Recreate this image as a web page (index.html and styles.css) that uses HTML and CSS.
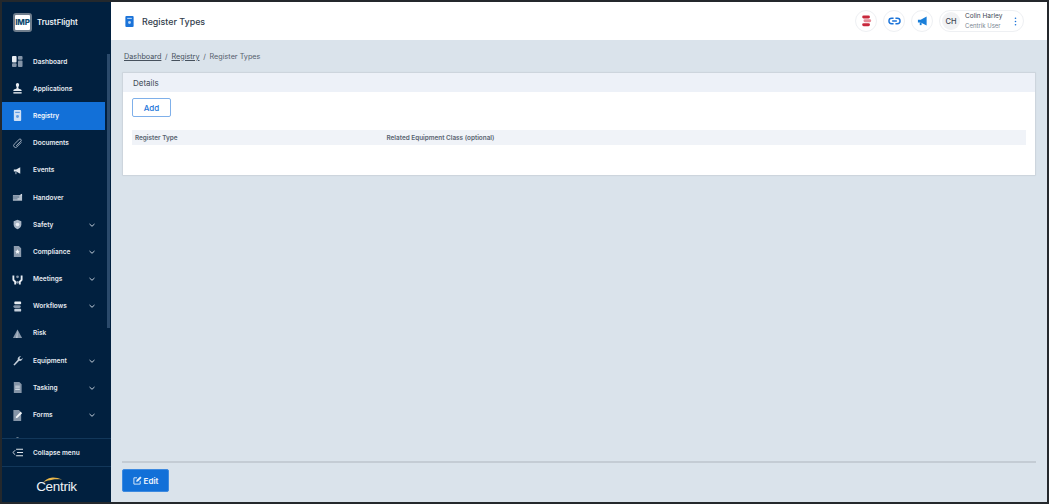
FILE: index.html
```html
<!DOCTYPE html>
<html lang="en">
<head>
<meta charset="utf-8">
<title>Register Types</title>
<link rel="stylesheet" href="styles.css">
</head>
<body>
<div class="frame">
  <aside class="sidebar">
    <div class="brand">
      <span class="imp">IMP</span>
      <span class="brand-name">TrustFlight</span>
    </div>
    <div class="nav-wrap">
      <nav class="nav">
        <a class="item"><svg class="ic" viewBox="0 0 12 12"><rect x="0" y="0" width="5" height="7" rx="1" fill="#e8edf3"/><rect x="0" y="8" width="5" height="4" rx="1" fill="#8595a8"/><rect x="6.500" y="0" width="5" height="4" rx="1" fill="#8595a8"/><rect x="6.500" y="5" width="5" height="7" rx="1" fill="#8595a8"/></svg><span>Dashboard</span></a>
        <a class="item"><svg class="ic" viewBox="0 0 12 12"><path d="M4.200 1.800a1.800 1.800 0 0 1 3.600 0c0 1.300-.9 2-.9 3.500 0 .7.500 1 1.300 1.200 1.400.3 2.300.6 2.300 1.800v.5H1.500v-.5c0-1.200.9-1.500 2.300-1.800.8-.2 1.300-.5 1.300-1.200 0-1.500-.9-2.200-.9-3.500z" fill="#e8edf3"/><rect x="1.500" y="10" width="9" height="1.500" fill="#e8edf3"/></svg><span>Applications</span></a>
        <a class="item active"><svg class="ic" viewBox="0 0 12 12"><rect x="2" y="0" width="8" height="12" rx="1" fill="#cfe0f5"/><rect x="3.500" y="2" width="5" height="1.200" fill="#5f9be3"/><circle cx="6" cy="7" r="1.600" fill="#5f9be3"/></svg><span>Registry</span></a>
        <a class="item"><svg class="ic" viewBox="0 0 12 12"><path d="M10.500 4.500 5.300 9.700a2 2 0 0 1-2.900-2.900l5.400-5.300a1.300 1.300 0 0 1 1.900 1.900L4.500 8.500" fill="none" stroke="#a9b6c6" stroke-width="1"/></svg><span>Documents</span></a>
        <a class="item"><svg class="ic" viewBox="0 0 12 12"><path d="M2 5h2.500L9 2.500v7L4.500 7H2z" fill="#dfe5ec"/><rect x="3.500" y="7.500" width="1.500" height="2.500" fill="#8595a8"/></svg><span>Events</span></a>
        <a class="item"><svg class="ic" viewBox="0 0 12 12"><rect x="1" y="3.500" width="10" height="6" fill="#b6c1ce"/><path d="M1 5h7v1H1zM1 7h5v1H1z" fill="#46607b"/><path d="M8 3.500 11 2v2z" fill="#e8edf3"/></svg><span>Handover</span></a>
        <a class="item"><svg class="ic" viewBox="0 0 12 12"><path d="M6 .8 10.200 2.500v3.600c0 2.600-2 4.300-4.200 5.100-2.200-.8-4.200-2.500-4.200-5.100V2.500z" fill="#a9b6c6"/><circle cx="6" cy="6" r="2" fill="#e8edf3"/></svg><span>Safety</span><svg class="chev" viewBox="0 0 8 8"><path d="M1.500 3 4 5.300 6.500 3" fill="none" stroke="#c4ced9" stroke-width="1"/></svg></a>
        <a class="item"><svg class="ic" viewBox="0 0 12 12"><path d="M2 0h5.500L10 2.500V12H2z" fill="#8d9cae"/><path d="m6 3.500.8 1.700 1.800.2-1.300 1.200.3 1.900L6 7.600l-1.600.9.300-1.900-1.300-1.200 1.800-.2z" fill="#f2f5f8"/></svg><span>Compliance</span><svg class="chev" viewBox="0 0 8 8"><path d="M1.500 3 4 5.300 6.500 3" fill="none" stroke="#c4ced9" stroke-width="1"/></svg></a>
        <a class="item"><svg class="ic" viewBox="0 0 12 12"><circle cx="6" cy="3" r="1.500" fill="#8595a8"/><circle cx="6" cy="9" r="1.500" fill="#8595a8"/><path d="M.5 1.500h2V6L4.500 8v3.500h-2V8.900L.5 6.900zM11.500 1.500h-2V6L7.500 8v3.500h2V8.900l2-2z" fill="#e8edf3"/></svg><span>Meetings</span><svg class="chev" viewBox="0 0 8 8"><path d="M1.500 3 4 5.300 6.500 3" fill="none" stroke="#c4ced9" stroke-width="1"/></svg></a>
        <a class="item"><svg class="ic" viewBox="0 0 12 12"><rect x="2.500" y="0.500" width="7.500" height="3" rx="1" fill="#e8edf3"/><rect x="1.500" y="4.500" width="8" height="3" rx="1.500" fill="#8595a8"/><rect x="2.500" y="8.500" width="7.500" height="3" rx="1" fill="#c5cfdb"/></svg><span>Workflows</span><svg class="chev" viewBox="0 0 8 8"><path d="M1.500 3 4 5.300 6.500 3" fill="none" stroke="#c4ced9" stroke-width="1"/></svg></a>
        <a class="item"><svg class="ic" viewBox="0 0 12 12"><path d="M6 1.500 11 11H1z" fill="#8595a8"/><path d="M6 1.500V11H4.500z" fill="#c5cfdb"/></svg><span>Risk</span></a>
        <a class="item"><svg class="ic" viewBox="0 0 12 12"><path d="M1.500 10.500 6.300 5.200c-.5-1.700.8-3.900 3.400-3.700L8 3.200l.7 1.200 1.500.2 1.300-1.500c.3 2.400-1.800 3.800-3.700 3.300l-5 5.100z" fill="#c5cfdb"/></svg><span>Equipment</span><svg class="chev" viewBox="0 0 8 8"><path d="M1.500 3 4 5.300 6.500 3" fill="none" stroke="#c4ced9" stroke-width="1"/></svg></a>
        <a class="item"><svg class="ic" viewBox="0 0 12 12"><path d="M2 0h6l2.500 2.500V12H2z" fill="#8595a8"/><path d="M3.500 4h5v.8h-5zM3.500 6h5v.8h-5zM3.500 8h5v.8h-5z" fill="#e8edf3"/></svg><span>Tasking</span><svg class="chev" viewBox="0 0 8 8"><path d="M1.500 3 4 5.300 6.500 3" fill="none" stroke="#c4ced9" stroke-width="1"/></svg></a>
        <a class="item"><svg class="ic" viewBox="0 0 12 12"><path d="M1.500 0h6L10 2.500V12H1.500z" fill="#8595a8"/><path d="m4 9 .5-2L9.500 2l1.500 1.500-5 5z" fill="#f2f5f8"/></svg><span>Forms</span><svg class="chev" viewBox="0 0 8 8"><path d="M1.500 3 4 5.300 6.500 3" fill="none" stroke="#c4ced9" stroke-width="1"/></svg></a>
        <a class="item"><svg class="ic" viewBox="0 0 12 12"><circle cx="6" cy="3" r="2.500" fill="#e8edf3"/></svg></a>
      </nav>
      <div class="scrollbar"></div>
    </div>
    <a class="collapse"><svg class="ic" viewBox="0 0 12 12"><path d="M4.500 2H12v1H4.500zM5.500 5.500H12v1H5.500zM4.500 9H12v1H4.500z" fill="#dfe5ec"/><path d="M3.500 3.500 1 6l2.500 2.500" fill="none" stroke="#dfe5ec" stroke-width="1"/></svg><span>Collapse menu</span></a>
    <div class="centrik">
      <span class="centrik-word">Centrik</span>
      <svg class="swoosh" viewBox="0 0 26 6"><path d="M1 5.500C6 1.500 10 .5 13 .5c4 0 8 1 12 2.500-5-.5-9-.5-13 .2-4 .6-7 1.500-11 2.800z" fill="#e9b64a"/></svg>
    </div>
  </aside>
  <div class="main">
    <header class="topbar">
      <div class="title-wrap">
        <svg class="title-ic" viewBox="0 0 12 12"><rect x="1.500" y="0" width="9" height="12" rx="1.200" fill="#1a73d9"/><rect x="3.500" y="2" width="5" height="1.200" fill="#b6d4f5"/><circle cx="6" cy="7" r="1.600" fill="#b6d4f5"/></svg>
        <span class="title">Register Types</span>
      </div>
      <div class="actions">
        <span class="round"><svg class="act-ic" viewBox="0 0 12 14"><rect x="1" y="0.500" width="9" height="3.500" rx="1.700" fill="#c8283c"/><rect x="2.500" y="5" width="9" height="3.500" rx="1.700" fill="#e58b96"/><rect x="1" y="9.500" width="9" height="3.500" rx="1.700" fill="#c8283c"/></svg></span>
        <span class="round"><svg class="act-ic wide" viewBox="0 0 14 8"><path d="M6 1H4a3 3 0 0 0 0 6h2M8 1h2a3 3 0 0 1 0 6H8M4.500 4h5" fill="none" stroke="#1a73d9" stroke-width="1.500"/></svg></span>
        <span class="round"><svg class="act-ic" viewBox="0 0 12 12"><path d="M1 4.500h3L10.500 1v10L4 7.500H1z" fill="#1a7fd9"/><rect x="3" y="7.500" width="2" height="3" fill="#1a7fd9"/></svg></span>
        <div class="user">
          <span class="avatar">CH</span>
          <div class="user-text"><span class="user-name">Colin Harley</span><span class="user-role">Centrik User</span></div>
          <svg class="dots" viewBox="0 0 3 11"><circle cx="1.500" cy="1.500" r="1" fill="#1a73d9"/><circle cx="1.500" cy="5.500" r="1" fill="#1a73d9"/><circle cx="1.500" cy="9.500" r="1" fill="#1a73d9"/></svg>
        </div>
      </div>
    </header>
    <div class="content">
      <div class="crumbs"><a>Dashboard</a><span class="sep">/</span><a>Registry</a><span class="sep">/</span><span>Register Types</span></div>
      <section class="card">
        <div class="card-head">Details</div>
        <div class="card-body">
          <button class="btn-add">Add</button>
          <div class="thead"><span class="col1">Register Type</span><span>Related Equipment Class (optional)</span></div>
        </div>
      </section>
      <footer class="foot">
        <button class="btn-edit"><svg class="edit-ic" viewBox="0 0 10 10"><path d="M8 5.500V9H1V2h3.500" fill="none" stroke="#e6f0fb" stroke-width="1"/><path d="M3.500 6.500 4 4.500 8 .5 9.500 2l-4 4z" fill="#e6f0fb"/></svg>Edit</button>
      </footer>
    </div>
  </div>
</div>
</body>
</html>
```
FILE: styles.css
```css
* { box-sizing: border-box; }
html, body { margin: 0; height: 100%; }
body { font-family: Inter, "Liberation Sans", sans-serif; background: #222; overflow: hidden; }
.frame { display: flex; width: 1049px; height: 504px; border: 2px solid #24282c; overflow: hidden; }
.sidebar { width: 109px; flex: none; background: #01203f; display: flex; flex-direction: column; }
.brand { height: 40px; display: flex; align-items: center; gap: 5px; padding-left: 11px; flex: none; }
.imp { width: 19px; height: 19px; background: #fff; border: 2px solid #6f7d8c; border-radius: 3px; color: #0e4a6e; font-size: 8px; font-weight: 800; display: flex; align-items: center; justify-content: center; letter-spacing: -.2px; }
.brand-name { color: #eef2f6; font-size: 7.800px; font-weight: 600; }
.nav-wrap { flex: 1 1 0; min-height: 0; display: flex; position: relative; overflow: hidden; border-bottom: 1px solid #12375a; padding-top: 6px; }
.nav { width: 103px; flex: none; }
.item { height: 27.200px; display: flex; align-items: center; color: #e6ebf1; font-size: 6.500px; font-weight: 600; }
.item > span { flex: 1; }
.item .ic { margin: 0 10px; }
.ic { width: 11px; height: 11px; flex: none; }
.active { background: #1270d8; color: #f4f8fd; }
.chev { width: 8px; height: 8px; flex: none; margin-right: 9px; }
.scrollbar { position: absolute; right: 1px; top: 12px; width: 3px; height: 274px; background: #2b4a6b; }
.collapse { height: 28px; flex: none; display: flex; align-items: center; color: #e6ebf1; font-size: 6.500px; font-weight: 600; border-bottom: 1px solid #12375a; }
.collapse .ic { margin: 0 10px; }
.centrik { height: 35px; flex: none; display: flex; justify-content: center; align-items: center; position: relative; }
.centrik-word { color: #eef2f6; font-family: "Liberation Sans", sans-serif; font-size: 13.500px; letter-spacing: -.3px; margin-top: 3px; }
.swoosh { position: absolute; left: 41px; top: 10px; width: 20px; height: 5px; }
.main { flex: 1; min-width: 0; display: flex; flex-direction: column; background: #dae3eb; }
.topbar { height: 38px; flex: none; background: #fff; display: flex; align-items: center; justify-content: space-between; padding: 0 23px 0 13px; }
.title-wrap { display: flex; align-items: center; gap: 7px; }
.title-ic { width: 11px; height: 11px; }
.title { font-size: 8.900px; font-weight: 500; color: #33404d; }
.actions { display: flex; align-items: center; gap: 6px; }
.round { width: 22px; height: 22px; border: 1px solid #eef0f3; border-radius: 50%; display: flex; align-items: center; justify-content: center; }
.act-ic { width: 11px; height: 12px; }
.act-ic.wide { width: 13px; height: 8px; }
.user { height: 22px; width: 85px; border: 1px solid #eef0f3; border-radius: 11px; display: flex; align-items: center; }
.avatar { width: 18px; height: 18px; margin-left: 2px; border-radius: 50%; background: #f1f2f4; color: #3d4854; font-size: 7.500px; font-weight: 500; display: flex; align-items: center; justify-content: center; flex: none; }
.user-text { display: flex; flex-direction: column; gap: 2px; margin-left: 5px; flex: 1; }
.user-name { font-size: 6.500px; color: #3d4854; line-height: 8px; }
.user-role { font-size: 6px; color: #7b8793; line-height: 8px; }
.dots { width: 3px; height: 9px; margin-right: 6px; flex: none; }
.content { flex: 1; min-height: 0; display: flex; flex-direction: column; padding: 0 11px 10px 11px; }
.crumbs { height: 32px; padding: 0 2px; display: flex; align-items: center; gap: 3.700px; font-size: 7.250px; color: #56616d; flex: none; }
.crumbs a { text-decoration: underline; color: #46515d; }
.card { background: #fff; border: 1px solid #cdd5dd; border-radius: 1px; height: 104px; flex: none; box-shadow: 0 0 1px #c6cfd8; }
.card-head { height: 19px; background: #edf1f8; font-size: 8px; color: #3f4a56; padding-left: 10px; display: flex; align-items: center; }
.card-body { padding: 6px 9px; }
.btn-add { display: block; width: 39px; height: 19px; background: #fff; border: 1px solid #7fb0ea; border-radius: 2px; color: #1a73d9; font: 500 8px Inter, sans-serif; padding: 0; }
.thead { margin-top: 13px; height: 15px; background: #f0f3f8; display: flex; align-items: center; font-size: 6.400px; font-weight: 600; color: #5a6572; padding-left: 3px; }
.col1 { width: 251.500px; }
.foot { margin-top: auto; border-top: 2px solid #c4ccd4; padding-top: 6px; flex: none; }
.btn-edit { width: 47px; height: 23px; background: #1270d8; border: 1px solid #3d8ae0; border-radius: 2px; color: #f2f7fd; font: 600 8px Inter, sans-serif; display: flex; align-items: center; justify-content: center; gap: 2px; padding: 0; }
.edit-ic { width: 9px; height: 9px; }
```
